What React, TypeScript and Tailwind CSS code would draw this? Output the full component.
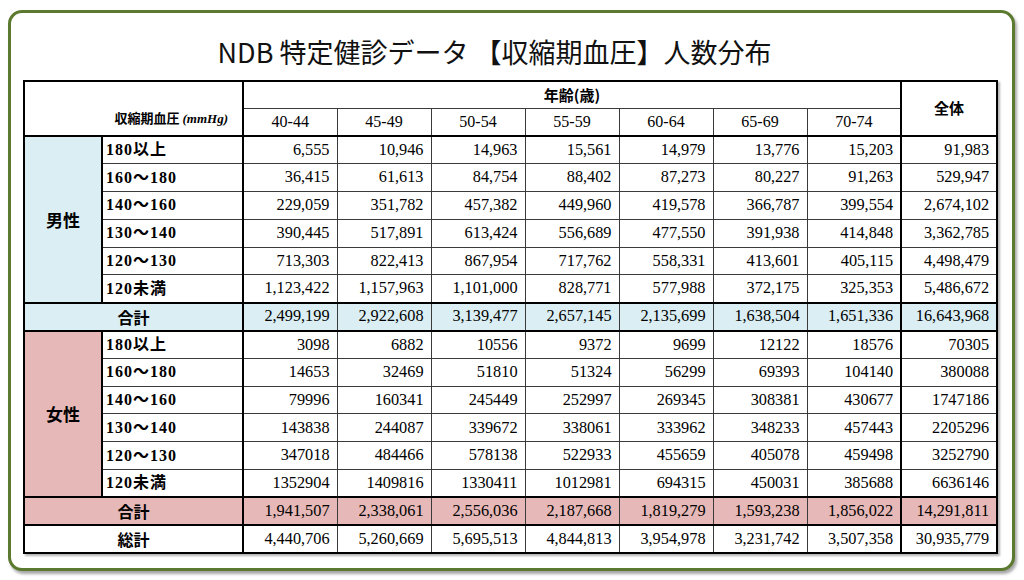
import React from "react";

const ages = ["40-44", "45-49", "50-54", "55-59", "60-64", "65-69", "70-74"];
const labels = ["180以上", "160～180", "140～160", "130～140", "120～130", "120未満"];

const male: string[][] = [
  ["6,555", "10,946", "14,963", "15,561", "14,979", "13,776", "15,203", "91,983"],
  ["36,415", "61,613", "84,754", "88,402", "87,273", "80,227", "91,263", "529,947"],
  ["229,059", "351,782", "457,382", "449,960", "419,578", "366,787", "399,554", "2,674,102"],
  ["390,445", "517,891", "613,424", "556,689", "477,550", "391,938", "414,848", "3,362,785"],
  ["713,303", "822,413", "867,954", "717,762", "558,331", "413,601", "405,115", "4,498,479"],
  ["1,123,422", "1,157,963", "1,101,000", "828,771", "577,988", "372,175", "325,353", "5,486,672"],
];
const maleTotal = ["2,499,199", "2,922,608", "3,139,477", "2,657,145", "2,135,699", "1,638,504", "1,651,336", "16,643,968"];

const female: string[][] = [
  ["3098", "6882", "10556", "9372", "9699", "12122", "18576", "70305"],
  ["14653", "32469", "51810", "51324", "56299", "69393", "104140", "380088"],
  ["79996", "160341", "245449", "252997", "269345", "308381", "430677", "1747186"],
  ["143838", "244087", "339672", "338061", "333962", "348233", "457443", "2205296"],
  ["347018", "484466", "578138", "522933", "455659", "405078", "459498", "3252790"],
  ["1352904", "1409816", "1330411", "1012981", "694315", "450031", "385688", "6636146"],
];
const femaleTotal = ["1,941,507", "2,338,061", "2,556,036", "2,187,668", "1,819,279", "1,593,238", "1,856,022", "14,291,811"];
const grandTotal = ["4,440,706", "5,260,669", "5,695,513", "4,844,813", "3,954,978", "3,231,742", "3,507,358", "30,935,779"];

const serif = "font-['Liberation_Serif','Noto_Sans_CJK_JP',serif]";
const gothic = "font-['Noto_Sans_CJK_JP',sans-serif]";
const cellBase = "border border-[#3a3a3a] p-0";

function NumCells({ values, bg }: { values: string[]; bg?: string }) {
  return (
    <>
      {values.map((v, i) => (
        <td
          key={i}
          className={`${cellBase} ${bg ?? ""} text-right pr-[7px] text-[16.3px] text-black ${serif} ${
            i === 7 ? "border-l-2 border-l-black" : ""
          }`}
        >
          {v}
        </td>
      ))}
    </>
  );
}

function GroupRows({
  sex,
  data,
  total,
  bg,
}: {
  sex: string;
  data: string[][];
  total: string[];
  bg: string;
}) {
  return (
    <>
      {data.map((row, r) => (
        <tr key={r} className="h-[27.8px]">
          {r === 0 && (
            <td
              rowSpan={6}
              className={`${cellBase} ${bg} border-r-2 border-r-black text-center text-[17px] font-bold ${gothic}`}
            >
              {sex}
            </td>
          )}
          <td
            className={`${cellBase} border-r-2 border-r-black pl-[3px] text-left text-[16px] font-bold tracking-[1px] ${serif}`}
          >
            {labels[r]}
          </td>
          <NumCells values={row} />
        </tr>
      ))}
      <tr className="h-[27.8px]">
        <td
          colSpan={2}
          className={`${cellBase} ${bg} border-y-2 border-y-black border-r-2 border-r-black text-center text-[16px] font-bold ${gothic}`}
        >
          合計
        </td>
        {total.map((v, i) => (
          <td
            key={i}
            className={`${cellBase} ${bg} border-y-2 border-y-black text-right pr-[7px] text-[16.3px] text-black ${serif} ${
              i === 7 ? "border-l-2 border-l-black" : ""
            }`}
          >
            {v}
          </td>
        ))}
      </tr>
    </>
  );
}

export default function App() {
  return (
    <div className="w-[1024px] h-[580px] bg-white overflow-hidden pt-[10px] pl-[8px]">
      <div className="box-border w-[1007px] h-[561px] border-[3px] border-[#5c7a2f] rounded-[14px] bg-white shadow-[2px_3px_3px_rgba(0,0,0,0.35)] flex flex-col">
        <h1
          className={`mt-[19px] text-center pr-[34px] text-[27px] leading-[39px] font-normal text-[#111] ${gothic}`}
        >
          NDB 特定健診データ 【収縮期血圧】人数分布
        </h1>
        <table className="ml-[12px] mt-[9px] w-[973px] table-fixed border-collapse border-2 border-black shadow-[2px_2px_2px_rgba(0,0,0,0.3)]">
          <colgroup>
            <col className="w-[78px]" />
            <col className="w-[141px]" />
            {ages.map((a) => (
              <col key={a} className="w-[94px]" />
            ))}
            <col className="w-[96px]" />
          </colgroup>
          <tbody>
            <tr className="h-[27px]">
              <td
                colSpan={2}
                rowSpan={2}
                className={`${cellBase} border-r-2 border-r-black border-b-2 border-b-black align-bottom text-right pr-[14px] pb-[6px]`}
              >
                <span className={`text-[13px] font-bold ${gothic}`}>収縮期血圧 </span>
                <span className={`text-[13px] font-bold italic ${serif}`}>(mmHg)</span>
              </td>
              <td
                colSpan={7}
                className={`${cellBase} text-center text-[15px] font-bold ${gothic}`}
              >
                年齢(歳)
              </td>
              <td
                rowSpan={2}
                className={`${cellBase} border-l-2 border-l-black border-b-2 border-b-black text-center text-[15px] font-bold ${gothic}`}
              >
                全体
              </td>
            </tr>
            <tr className="h-[28px]">
              {ages.map((a) => (
                <td
                  key={a}
                  className={`${cellBase} border-b-2 border-b-black text-center text-[16px] ${serif}`}
                >
                  {a}
                </td>
              ))}
            </tr>
            <GroupRows sex="男性" data={male} total={maleTotal} bg="bg-[#daeef3]" />
            <GroupRows sex="女性" data={female} total={femaleTotal} bg="bg-[#e6b8b7]" />
            <tr className="h-[28px]">
              <td
                colSpan={2}
                className={`${cellBase} border-r-2 border-r-black text-center text-[16px] font-bold ${gothic}`}
              >
                総計
              </td>
              <NumCells values={grandTotal} />
            </tr>
          </tbody>
        </table>
      </div>
    </div>
  );
}
